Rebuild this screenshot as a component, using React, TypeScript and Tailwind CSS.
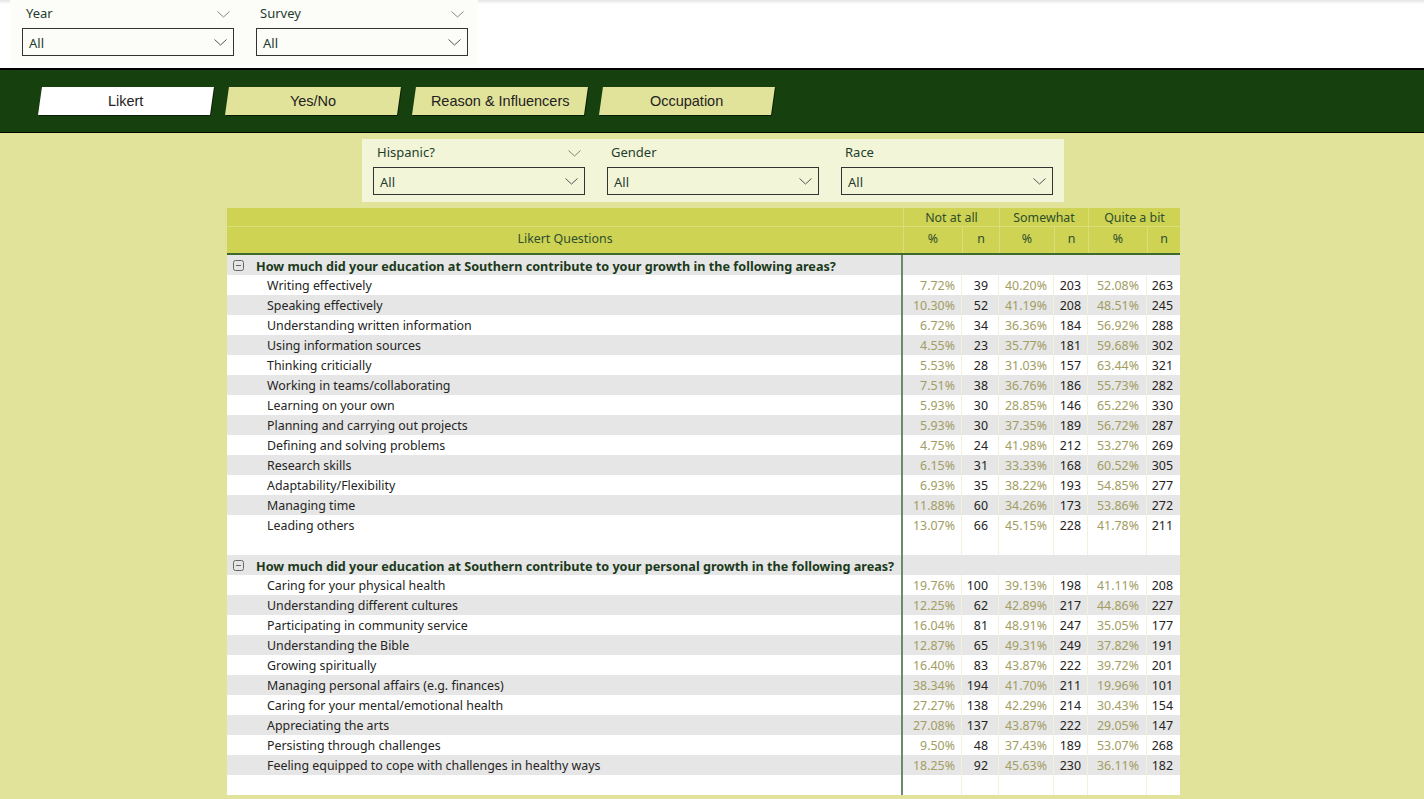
import React from "react";

type Row = [string, string, number, string, number, string, number];

const growth: Row[] = [
  ["Writing effectively", "7.72%", 39, "40.20%", 203, "52.08%", 263],
  ["Speaking effectively", "10.30%", 52, "41.19%", 208, "48.51%", 245],
  ["Understanding written information", "6.72%", 34, "36.36%", 184, "56.92%", 288],
  ["Using information sources", "4.55%", 23, "35.77%", 181, "59.68%", 302],
  ["Thinking criticially", "5.53%", 28, "31.03%", 157, "63.44%", 321],
  ["Working in teams/collaborating", "7.51%", 38, "36.76%", 186, "55.73%", 282],
  ["Learning on your own", "5.93%", 30, "28.85%", 146, "65.22%", 330],
  ["Planning and carrying out projects", "5.93%", 30, "37.35%", 189, "56.72%", 287],
  ["Defining and solving problems", "4.75%", 24, "41.98%", 212, "53.27%", 269],
  ["Research skills", "6.15%", 31, "33.33%", 168, "60.52%", 305],
  ["Adaptability/Flexibility", "6.93%", 35, "38.22%", 193, "54.85%", 277],
  ["Managing time", "11.88%", 60, "34.26%", 173, "53.86%", 272],
  ["Leading others", "13.07%", 66, "45.15%", 228, "41.78%", 211],
];

const personal: Row[] = [
  ["Caring for your physical health", "19.76%", 100, "39.13%", 198, "41.11%", 208],
  ["Understanding different cultures", "12.25%", 62, "42.89%", 217, "44.86%", 227],
  ["Participating in community service", "16.04%", 81, "48.91%", 247, "35.05%", 177],
  ["Understanding the Bible", "12.87%", 65, "49.31%", 249, "37.82%", 191],
  ["Growing spiritually", "16.40%", 83, "43.87%", 222, "39.72%", 201],
  ["Managing personal affairs (e.g. finances)", "38.34%", 194, "41.70%", 211, "19.96%", 101],
  ["Caring for your mental/emotional health", "27.27%", 138, "42.29%", 214, "30.43%", 154],
  ["Appreciating the arts", "27.08%", 137, "43.87%", 222, "29.05%", 147],
  ["Persisting through challenges", "9.50%", 48, "37.43%", 189, "53.07%", 268],
  ["Feeling equipped to cope with challenges in healthy ways", "18.25%", 92, "45.63%", 230, "36.11%", 182],
];

const tabs = ["Likert", "Yes/No", "Reason & Influencers", "Occupation"];

function Chevron({ className = "" }: { className?: string }) {
  return (
    <svg width="13" height="7" viewBox="0 0 13 7" className={className}>
      <polyline points="0.5,0.5 6.5,6 12.5,0.5" fill="none" stroke="#555" strokeWidth="1" />
    </svg>
  );
}

function Slicer({ label, headChevron }: { label: string; headChevron?: boolean }) {
  return (
    <div className="w-[212px]">
      <div className="flex h-[28px] items-center justify-between pl-[4px] pr-[4px] text-[13px] text-[#1f3d2e]">
        <span>{label}</span>
        {headChevron && <Chevron className="opacity-70" />}
      </div>
      <div className="flex h-[28px] items-center justify-between border border-[#333] pl-[6px] pr-[6px] text-[13px] text-[#1f3d2e]">
        <span className="pt-[4px]">All</span>
        <Chevron />
      </div>
    </div>
  );
}

const numW = ["w-[59px] pr-[6px]", "w-[37px] pr-[10px]", "w-[55px] pr-[6px]", "w-[34px] pr-[6px]", "w-[59px] pr-[7px]", "w-[33px] pr-[7px]"];
const colW = ["w-[59px]", "w-[37px]", "w-[55px]", "w-[34px]", "w-[59px]", "w-[33px]"];

function DataRow({ row, gray }: { row: Row; gray: boolean }) {
  const [q, ...vals] = row;
  return (
    <div className={`flex h-[20px] items-center ${gray ? "bg-[#e6e6e6]" : "bg-white"}`}>
      <div className="flex h-full w-[676px] items-center border-r-2 border-[#6b8a6b] pl-[40px] pt-[2px] text-[#252423]">{q}</div>
      {vals.map((v, i) => (
        <div
          key={i}
          className={`flex h-full items-center justify-end border-r border-[#f1f1dc] pt-[2px] last:border-r-0 ${numW[i]} ${
            i % 2 === 0 ? "text-[#a29d62]" : "text-[#252423]"
          }`}
        >
          {v}
        </div>
      ))}
    </div>
  );
}

function BlankRow({ gray }: { gray: boolean }) {
  return (
    <div className={`flex h-[20px] ${gray ? "bg-[#e6e6e6]" : "bg-white"}`}>
      <div className="h-full w-[676px] border-r-2 border-[#6b8a6b]" />
      {colW.map((w, i) => (
        <div key={i} className={`h-full border-r border-[#f1f1dc] last:border-r-0 ${w}`} />
      ))}
    </div>
  );
}

function SectionRow({ title }: { title: string }) {
  return (
    <div className="flex h-[20px] items-center bg-[#e6e6e6]">
      <div className="flex h-full w-[676px] shrink-0 items-center border-r-2 border-[#6b8a6b] pl-[6px]">
        <svg width="11" height="11" viewBox="0 0 11 11" className="mr-[12px] mt-[1px] shrink-0">
          <rect x="0.5" y="0.5" width="10" height="10" rx="2" fill="none" stroke="#666" strokeWidth="1" />
          <line x1="3" y1="5.5" x2="8" y2="5.5" stroke="#666" strokeWidth="1" />
        </svg>
        <span className="whitespace-nowrap pt-[2px] text-[12.65px] font-bold text-[#1b3a1b]">{title}</span>
      </div>
    </div>
  );
}

export default function App() {
  return (
    <div className="h-[799px] w-[1424px] overflow-hidden bg-[#e2e39b] font-['Segoe_UI','Noto_Sans',sans-serif]">
      <div className="h-[68px] bg-white bg-[linear-gradient(180deg,#e4e4e4,#ffffff_4px)]">
        <div className="ml-[10px] flex h-[65px] w-[468px] gap-[22px] bg-[#fcfcf8] pl-[12px]">
          <Slicer label="Year" headChevron />
          <Slicer label="Survey" headChevron />
        </div>
      </div>

      <div className="flex h-[65px] items-start gap-[15px] border-t-2 border-b border-black bg-[#17400f] pl-[40px] pt-[17px]">
        {tabs.map((t, i) => (
          <div
            key={t}
            className={`flex h-[28px] w-[172px] -skew-x-[8deg] items-center justify-center pt-[2px] shadow-[1px_1px_0_rgba(0,0,0,0.55)] ${
              i === 0 ? "bg-white" : "bg-[#e2e39b]"
            }`}
          >
            <span className="skew-x-[8deg] font-['Liberation_Sans',sans-serif] text-[14.5px] text-[#222]">{t}</span>
          </div>
        ))}
      </div>

      <div className="ml-[362px] mt-[6px] flex h-[63px] w-[702px] gap-[22px] bg-[#f3f5d8] pl-[11px]">
        <Slicer label="Hispanic?" headChevron />
        <Slicer label="Gender" />
        <Slicer label="Race" />
      </div>

      <div className="ml-[227px] mt-[6px] w-[953px] text-[12.4px]">
        <div className="bg-[#cfd353] text-[#2d4f2d]">
          <div className="flex h-[19px] items-center border-b border-[#dadd78]">
            <div className="w-[676px]" />
            <div className="flex h-full w-[96px] items-center justify-center border-l border-[#dadd78] pt-[2px]">Not at all</div>
            <div className="flex h-full w-[89px] items-center justify-center border-l border-[#dadd78] pt-[2px]">Somewhat</div>
            <div className="flex h-full w-[92px] items-center justify-center border-l border-[#dadd78] pt-[2px]">Quite a bit</div>
          </div>
          <div className="flex h-[28px] items-center border-b-2 border-[#3e6a2e]">
            <div className="flex h-full w-[676px] items-center justify-center pb-[2px]">Likert Questions</div>
            {["%", "n", "%", "n", "%", "n"].map((h, i) => (
              <div key={i} className={`flex h-full items-center justify-center border-l border-[#dadd78] pb-[2px] ${colW[i]}`}>
                {h}
              </div>
            ))}
          </div>
        </div>

        <SectionRow title="How much did your education at Southern contribute to your growth in the following areas?" />
        {growth.map((r, i) => (
          <DataRow key={r[0]} row={r} gray={i % 2 === 1} />
        ))}
        <BlankRow gray={false} />
        <SectionRow title="How much did your education at Southern contribute to your personal growth in the following areas?" />
        {personal.map((r, i) => (
          <DataRow key={r[0]} row={r} gray={i % 2 === 1} />
        ))}
        <BlankRow gray={false} />
      </div>
    </div>
  );
}
